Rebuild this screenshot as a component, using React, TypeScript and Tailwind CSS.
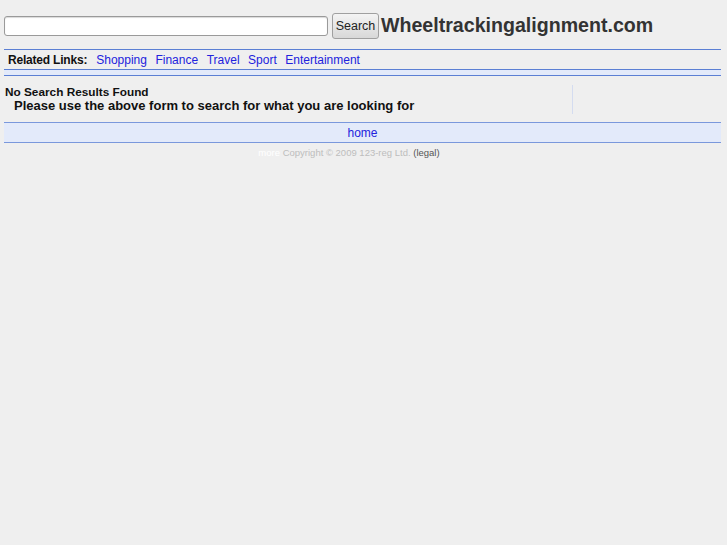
import React from "react";

export default function App() {
  const links = ["Shopping", "Finance", "Travel", "Sport", "Entertainment"];
  return (
    <div
      className="min-h-[545px] w-[727px] bg-[#efefef] text-black"
      style={{ fontFamily: '"Liberation Sans", Arial, sans-serif' }}
    >
      <div className="px-[4px] pt-[13px]">
        <div className="flex items-center h-[26px]">
          <input
            className="w-[324px] h-[20px] bg-white border border-[#9a9a9a] rounded-[3px] shadow-[inset_0_1px_1px_rgba(0,0,0,0.15)] outline-none"
            type="text"
          />
          <button className="ml-[4px] h-[26px] w-[47px] rounded-[3px] border border-[#a0a0a0] bg-gradient-to-b from-[#f4f4f4] to-[#d8d8d8] text-[12.5px] text-[#222] leading-none">
            Search
          </button>
          <span className="ml-[2px] text-[19.6px] font-bold text-[#333] leading-none">
            Wheeltrackingalignment.com
          </span>
        </div>
        <div className="mt-[10px] w-[717px] border-t border-[#5b7fd4]">
          <div className="flex items-center h-[19px] pl-[4px] text-[12px] gap-[8.5px]">
            <span className="font-bold text-[#111] tracking-[-0.2px] mr-[0.5px]">Related Links:</span>
            {links.map((l) => (
              <a key={l} className="text-[#2222dd]">
                {l}
              </a>
            ))}
          </div>
          <div className="border-t border-[#5b7fd4] h-[7px] bg-[#e3eafa] border-b" />
        </div>
        <div className="flex w-[717px] mt-[9px]">
          <div className="w-[568px]">
            <div className="text-[11.8px] font-bold text-[#111] leading-[14px] pl-[1px]">
              No Search Results Found
            </div>
            <div className="text-[13px] font-bold text-[#111] leading-[14px] pl-[10px]">
              Please use the above form to search for what you are looking for
            </div>
          </div>
          <div className="w-px h-[29px] bg-[#d4dcf0]" />
        </div>
        <div className="mt-[8px] w-[717px] h-[21px] border-t border-b border-[#7a98dc] bg-[#e3eafa] flex items-center justify-center text-[12px] text-[#2222dd]">
          home
        </div>
        <div className="mt-[4px] w-[717px] pr-[27px] text-center text-[9.5px] leading-[12px]">
          <span className="text-white">more</span>{" "}
          <span className="text-[#bdbdbd]">Copyright © 2009 123-reg Ltd.</span>{" "}
          <span className="text-[#555]">(legal)</span>
        </div>
      </div>
    </div>
  );
}
